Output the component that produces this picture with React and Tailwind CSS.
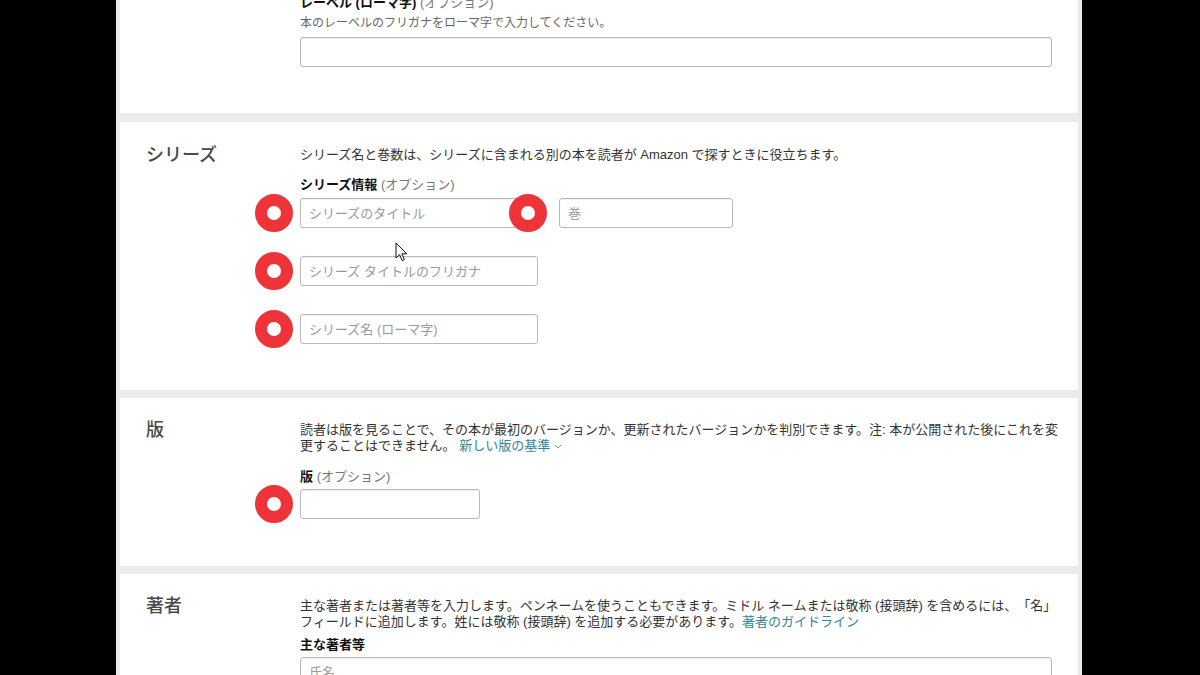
import React from 'react'

const Marker = ({ className }) => (
  <span className={`pointer-events-none absolute h-[38px] w-[38px] rounded-full border-[12px] border-[#ee3438] bg-white ${className}`} />
)

const TextInput = ({ placeholder, className = '', marker, markerRight }) => (
  <div className={`relative ${className}`}>
    <input
      type="text"
      placeholder={placeholder}
      className="block h-[30px] w-full rounded-[3px] border border-[#b9b9b9] bg-white px-[8px] text-[13px] text-[#333] shadow-[inset_0_1px_0_rgba(0,0,0,0.05)] outline-none placeholder:text-[#9a9a9a]"
    />
    {marker && <Marker className="left-[-45px] top-[-4px]" />}
    {markerRight && <Marker className="right-[-9px] top-[-4px]" />}
  </div>
)

const Label = ({ children, optional, className = '' }) => (
  <div className={`text-[13px] leading-[16px] ${className}`}>
    <span className="font-bold text-[#111]">{children}</span>
    {optional && <span className="text-[#777]"> (オプション)</span>}
  </div>
)

const Panel = ({ title, children, className = '' }) => (
  <section className={`relative flex bg-white pl-[26px] pr-[10px] ${className}`}>
    <div className="w-[154px] shrink-0">
      {title && <h2 className="-mt-[2px] text-[18px] font-medium leading-[20px] text-[#4a4a4a]">{title}</h2>}
    </div>
    <div className="min-w-0 flex-1">{children}</div>
  </section>
)

const Cursor = () => (
  <svg className="pointer-events-none absolute left-[275px] top-[120px]" width="13" height="20" viewBox="0 0 13 20">
    <path d="M1 1 L1 16 L4.6 12.6 L7.2 18.6 L9.4 17.6 L6.9 11.8 L11.8 11.8 Z" fill="#fff" stroke="#111" strokeWidth="1" strokeLinejoin="round" />
  </svg>
)

const Chevron = () => (
  <svg className="ml-[4px] inline-block align-middle" width="8" height="5" viewBox="0 0 8 5">
    <path d="M1 1 L4 4 L7 1" fill="none" stroke="#8a8a8a" strokeWidth="1" />
  </svg>
)

export default function App() {
  return (
    <div
      className="flex h-[675px] w-[1200px] overflow-hidden bg-black text-[#333] [text-spacing-trim:space-all]"
      style={{ fontFamily: '"Liberation Sans", "Noto Sans CJK JP", sans-serif' }}
    >
      <div className="w-[116px] shrink-0" />
      <main className="flex w-[966px] shrink-0 flex-col gap-[9px] bg-[#ebebeb] px-[4px]">
        {/* label (romaji) */}
        <Panel className="pb-[46px]">
          <Label optional className="-mt-[5px]">レーベル (ローマ字)</Label>
          <p className="mt-[4px] text-[12px] leading-[16px] text-[#666]">本のレーベルのフリガナをローマ字で入力してください。</p>
          <TextInput className="mt-[6px] w-[752px]" />
        </Panel>

        {/* series */}
        <Panel title="シリーズ" className="pb-[46px] pt-[25px]">
          <p className="text-[13px] leading-[16px]">シリーズ名と巻数は、シリーズに含まれる別の本を読者が Amazon で探すときに役立ちます。</p>
          <Label optional className="mt-[14px]">シリーズ情報</Label>
          <div className="mt-[5px] flex gap-[21px]">
            <TextInput placeholder="シリーズのタイトル" className="w-[238px]" marker markerRight />
            <TextInput placeholder="巻" className="w-[174px]" />
          </div>
          <TextInput placeholder="シリーズ タイトルのフリガナ" className="mt-[28px] w-[238px]" marker />
          <TextInput placeholder="シリーズ名 (ローマ字)" className="mt-[28px] w-[238px]" marker />
          <Cursor />
        </Panel>

        {/* edition */}
        <Panel title="版" className="-mt-px pb-[47px] pt-[24px]">
          <p className="text-[13px] leading-[16px]">
            読者は版を見ることで、その本が最初のバージョンか、更新されたバージョンかを判別できます。注: 本が公開された後にこれを変更することはできません。{' '}
            <a className="text-[#2f8599]">
              新しい版の基準
              <Chevron />
            </a>
          </p>
          <Label optional className="mt-[15px]">版</Label>
          <TextInput className="mt-[4px] w-[180px]" marker />
        </Panel>

        {/* author */}
        <Panel title="著者" className="-mt-px pt-[24px] pb-[40px]">
          <p className="text-[13px] leading-[16px]">
            主な著者または著者等を入力します。ペンネームを使うこともできます。ミドル ネームまたは敬称 (接頭辞) を含めるには、「名」フィールドに追加します。姓には敬称 (接頭辞) を追加する必要があります。
            <a className="text-[#2f8599]">著者のガイドライン</a>
          </p>
          <Label className="mt-[7px]">主な著者等</Label>
          <TextInput placeholder="氏名" className="mt-[4px] w-[752px]" />
        </Panel>
      </main>
      <div className="flex-1" />
    </div>
  )
}
